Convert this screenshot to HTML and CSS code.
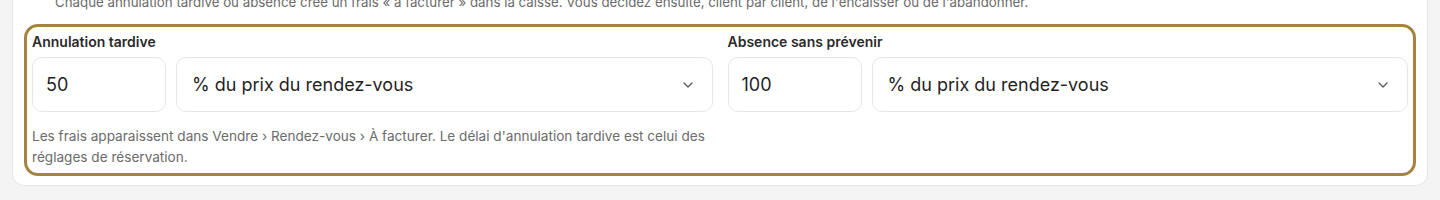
FILE: index.html
```html
<!DOCTYPE html>
<html lang="fr">
<head>
  <meta charset="UTF-8">
  <meta name="viewport" content="width=device-width, initial-scale=1.0">
  <title>Frais d'annulation</title>
  <link rel="stylesheet" href="styles.css">
</head>
<body>
  <section class="card">
    <p class="intro">Chaque annulation tardive ou absence crée un frais « à facturer » dans la caisse. Vous décidez ensuite, client par client, de l'encaisser ou de l'abandonner.</p>

    <div class="fees">
      <div class="fee-group">
        <label class="fee-label" for="late-value">Annulation tardive</label>
        <div class="fee-row">
          <input id="late-value" class="fee-input" type="text" value="50">
          <div class="fee-select">
            <span>% du prix du rendez-vous</span>
            <svg width="10" height="6" viewBox="0 0 10 6"><path d="M1 1l4 4 4-4" fill="none" stroke="#555" stroke-width="1.2" stroke-linecap="round" stroke-linejoin="round"/></svg>
          </div>
        </div>
        <p class="fee-help">Les frais apparaissent dans Vendre › Rendez-vous › À facturer. Le délai d'annulation tardive est celui des réglages de réservation.</p>
      </div>

      <div class="fee-group">
        <label class="fee-label" for="noshow-value">Absence sans prévenir</label>
        <div class="fee-row">
          <input id="noshow-value" class="fee-input" type="text" value="100">
          <div class="fee-select">
            <span>% du prix du rendez-vous</span>
            <svg width="10" height="6" viewBox="0 0 10 6"><path d="M1 1l4 4 4-4" fill="none" stroke="#555" stroke-width="1.2" stroke-linecap="round" stroke-linejoin="round"/></svg>
          </div>
        </div>
      </div>
    </div>
  </section>
</body>
</html>
```

FILE: styles.css
```css
* {
  box-sizing: border-box;
}

body {
  margin: 0;
  padding: 0 12px 14px;
  background-color: #f4f4f4;
  font-family: Inter, "Noto Sans", sans-serif;
  color: #1f1f1f;
  overflow: hidden;
}

.card {
  margin-top: -21px;
  padding: 12px 11px 9px;
  background-color: #fff;
  border: 1px solid #e6e6e6;
  border-radius: 12px;
}

.intro {
  margin: 0 0 12px;
  padding-left: 31px;
  font-size: 13.3px;
  line-height: 20px;
  color: #6b6b6b;
}

.fees {
  display: grid;
  grid-template-columns: 1fr 1fr;
  column-gap: 15px;
  padding: 5px;
  border: 3px solid #a6843f;
  border-radius: 14px;
}

.fee-group {
  display: flex;
  flex-direction: column;
}

.fee-label {
  margin-bottom: 5px;
  font-size: 14px;
  font-weight: 600;
  line-height: 20px;
  color: #2a2a2a;
}

.fee-row {
  display: flex;
  gap: 10px;
}

.fee-input,
.fee-select {
  height: 55px;
  border: 1px solid #e6e6e6;
  border-radius: 10px;
  background: #fff;
  font-family: inherit;
  font-size: 18px;
  color: #1f1f1f;
}

.fee-input {
  width: 134px;
  flex: none;
  padding: 0 13px;
  outline: none;
}

.fee-select {
  flex: 1;
  display: flex;
  align-items: center;
  justify-content: space-between;
  padding: 0 19px 0 15px;
}

.fee-help {
  margin: 14px 0 0;
  font-size: 13.6px;
  line-height: 21px;
  color: #6b6b6b;
}
```
